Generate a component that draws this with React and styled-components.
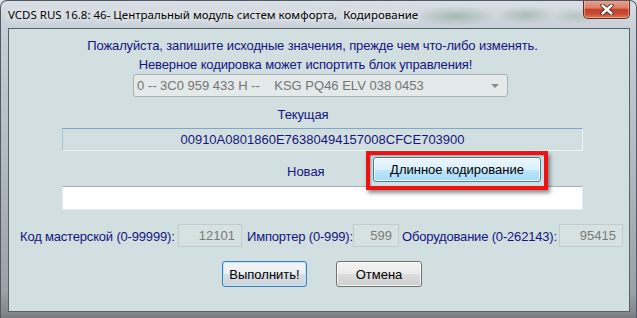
import React from 'react';
import styled, { createGlobalStyle } from 'styled-components';

const GlobalStyle = createGlobalStyle`
  html, body {
    margin: 0;
    padding: 0;
    background: #dfe4e8;
  }
  * {
    box-sizing: border-box;
  }
`;

const Window = styled.div`
  width: 637px;
  height: 318px;
  display: flex;
  flex-direction: column;
  border: 1px solid #4f5a66;
  border-bottom: none;
  border-radius: 7px 7px 0 0;
  overflow: hidden;
  background:
    radial-gradient(ellipse 40px 10px at 455px 15px, rgba(90, 130, 90, 0.35), transparent),
    radial-gradient(ellipse 30px 9px at 525px 14px, rgba(90, 130, 90, 0.3), transparent),
    radial-gradient(ellipse 25px 8px at 575px 15px, rgba(110, 140, 110, 0.25), transparent),
    linear-gradient(to bottom, #d9dfe5 0, #c6ced6 30px, #b4bbc2 150px, #9ca1a6 290px, #85898d 311px, #777b7f 100%);
  font-family: 'Liberation Sans', Arial, sans-serif;
`;

const TitleBar = styled.div`
  height: 27px;
  display: flex;
  align-items: center;
  padding-left: 7px;
  padding-right: 6px;
`;

const Title = styled.div`
  font-family: 'Noto Sans', 'DejaVu Sans', sans-serif;
  font-size: 11.5px;
  color: #000;
  white-space: pre;
  text-shadow: 0 0 6px #fff, 0 0 10px rgba(255, 255, 255, 0.9);
`;

const CloseButton = styled.div`
  margin-left: auto;
  align-self: flex-start;
  margin-top: -1px;
  width: 47px;
  height: 19px;
  border: 1px solid #6b2a1e;
  border-top: none;
  border-radius: 0 0 5px 5px;
  background: linear-gradient(to bottom, #e9a795 0%, #dc7c64 45%, #c3402a 52%, #c94d33 78%, #dc7a58 100%);
  box-shadow: inset 0 0 0 1px rgba(255, 220, 200, 0.45);
  display: flex;
  align-items: center;
  justify-content: center;
`;

const Body = styled.div`
  flex: 1;
  display: flex;
  padding: 0 6px 6px 7px;
`;

const Client = styled.div`
  flex: 1;
  display: flex;
  flex-direction: column;
  border: 1px solid #56616c;
  background: #d1dfe0;
  font-size: 13px;
  color: #14147f;
`;

const Line = styled.div`
  line-height: 19px;
  text-align: center;
  letter-spacing: -0.13px;
  margin-top: ${(p) => p.$top || 0}px;
  padding-right: ${(p) => p.$shift || 0}px;
  white-space: nowrap;
`;

const Select = styled.div`
  margin-left: 124px;
  width: 375px;
  height: 23px;
  border: 1px solid #a7afb8;
  border-radius: 3px;
  background: #e4e9ea;
  color: #747474;
  display: flex;
  align-items: center;
  padding-left: 3px;
  padding-right: 8px;
  white-space: pre;
`;

const Arrow = styled.span`
  margin-left: auto;
  width: 0;
  height: 0;
  border-left: 4px solid transparent;
  border-right: 4px solid transparent;
  border-top: 4px solid #8c8c8c;
`;

const Field = styled.div`
  margin-left: 53px;
  margin-top: ${(p) => p.$top || 0}px;
  width: 521px;
  height: ${(p) => p.$height}px;
  display: flex;
  align-items: center;
  justify-content: center;
  border: 1px solid ${(p) => (p.$white ? '#e3e9ef' : '#eef4f6')};
  border-top-color: ${(p) => (p.$white ? '#abadb3' : '#84a6c6')};
  border-left-color: ${(p) => (p.$white ? '#e3e9ef' : '#a9c3d8')};
  background: ${(p) => (p.$white ? '#fff' : '#d1dfe0')};
  color: #16167a;
`;

const NewRow = styled.div`
  display: flex;
  align-items: center;
  margin-top: 6px;
  padding-left: 278px;
`;

const RowLabel = styled.div`
  width: 86px;
  padding-top: 3px;
`;

const Spot = styled.div`
  position: relative;
`;

const Highlight = styled.div`
  position: absolute;
  left: -7px;
  right: -7px;
  top: -6px;
  bottom: -8px;
  border: 4px solid #ee1313;
  box-shadow: 2px 3px 4px rgba(0, 0, 0, 0.45), inset 1px 1px 2px rgba(0, 0, 0, 0.3);
  pointer-events: none;
`;

const Button = styled.div`
  width: ${(p) => p.$width}px;
  height: ${(p) => p.$height || 26}px;
  display: flex;
  align-items: center;
  justify-content: center;
  border: 1px solid ${(p) => (p.$hover || p.$primary ? '#3c7fb1' : '#707070')};
  border-radius: 3px;
  color: #000;
  box-shadow: inset 0 0 0 1px ${(p) => (p.$primary ? '#bfe3f8' : 'rgba(255, 255, 255, 0.8)')};
  background: ${(p) =>
    p.$hover
      ? 'linear-gradient(to bottom, #eaf6fd 0%, #d9f0fc 50%, #bee6fd 50%, #a7d9f5 100%)'
      : p.$primary
      ? 'linear-gradient(to bottom, #f2f5f8 0%, #e9eef2 50%, #d9dfe4 50%, #cbd3da 100%)'
      : 'linear-gradient(to bottom, #f2f2f2 0%, #ebebeb 50%, #dddddd 50%, #cfcfcf 100%)'};
`;

const ParamRow = styled.div`
  display: flex;
  align-items: center;
  margin-top: 14px;
  padding-left: 11px;
`;

const ParamLabel = styled.div`
  width: ${(p) => p.$width}px;
  white-space: nowrap;
  letter-spacing: -0.18px;
  padding-top: 2px;
`;

const ParamInput = styled.div`
  width: ${(p) => p.$width}px;
  height: 23px;
  margin-right: ${(p) => p.$gap || 0}px;
  border: 1px solid #c4cbcf;
  background: #d6e2e2;
  color: #7a7a7a;
  display: flex;
  align-items: center;
  justify-content: flex-end;
  padding-right: 6px;
`;

const ButtonRow = styled.div`
  display: flex;
  gap: 29px;
  margin-top: 14px;
  padding-left: 213px;
`;

const CloseIcon = () => (
  <svg width="14" height="11" viewBox="0 0 14 11">
    <path d="M2.5 1.5 L11.5 9.5 M11.5 1.5 L2.5 9.5" stroke="#3b2520" strokeWidth="4.2" strokeLinecap="round" />
    <path d="M2.5 1.5 L11.5 9.5 M11.5 1.5 L2.5 9.5" stroke="#fff" strokeWidth="2.4" strokeLinecap="round" />
  </svg>
);

export default function App() {
  return (
    <Window>
      <GlobalStyle />
      <TitleBar>
        <Title>VCDS RUS 16.8: 46- Центральный модуль систем комфорта,  Кодирование</Title>
        <CloseButton>
          <CloseIcon />
        </CloseButton>
      </TitleBar>
      <Body>
        <Client>
          <Line $top={7} $shift={13}>
            Пожалуйста, запишите исходные значения, прежде чем что-либо изменять.
          </Line>
          <Line $shift={27}>Неверное кодировка может испортить блок управления!</Line>
          <Select>
            {'0 -- 3C0 959 433 H --    KSG PQ46 ELV 038 0453'}
            <Arrow />
          </Select>
          <Line $top={8} $shift={32}>Текущая</Line>
          <Field $top={4} $height={23}>00910A0801860E76380494157008CFCE703900</Field>
          <NewRow>
            <RowLabel>Новая</RowLabel>
            <Spot>
              <Button $hover $width={168} $height={25}>Длинное кодирование</Button>
              <Highlight />
            </Spot>
          </NewRow>
          <Field $white $top={4} $height={24} />
          <ParamRow>
            <ParamLabel $width={158}>Код мастерской (0-99999):</ParamLabel>
            <ParamInput $width={64} $gap={5}>12101</ParamInput>
            <ParamLabel $width={106}>Импортер (0-999):</ParamLabel>
            <ParamInput $width={46} $gap={3}>599</ParamInput>
            <ParamLabel $width={157}>Оборудование (0-262143):</ParamLabel>
            <ParamInput $width={64}>95415</ParamInput>
          </ParamRow>
          <ButtonRow>
            <Button $primary $width={85}>Выполнить!</Button>
            <Button $width={86}>Отмена</Button>
          </ButtonRow>
        </Client>
      </Body>
    </Window>
  );
}
